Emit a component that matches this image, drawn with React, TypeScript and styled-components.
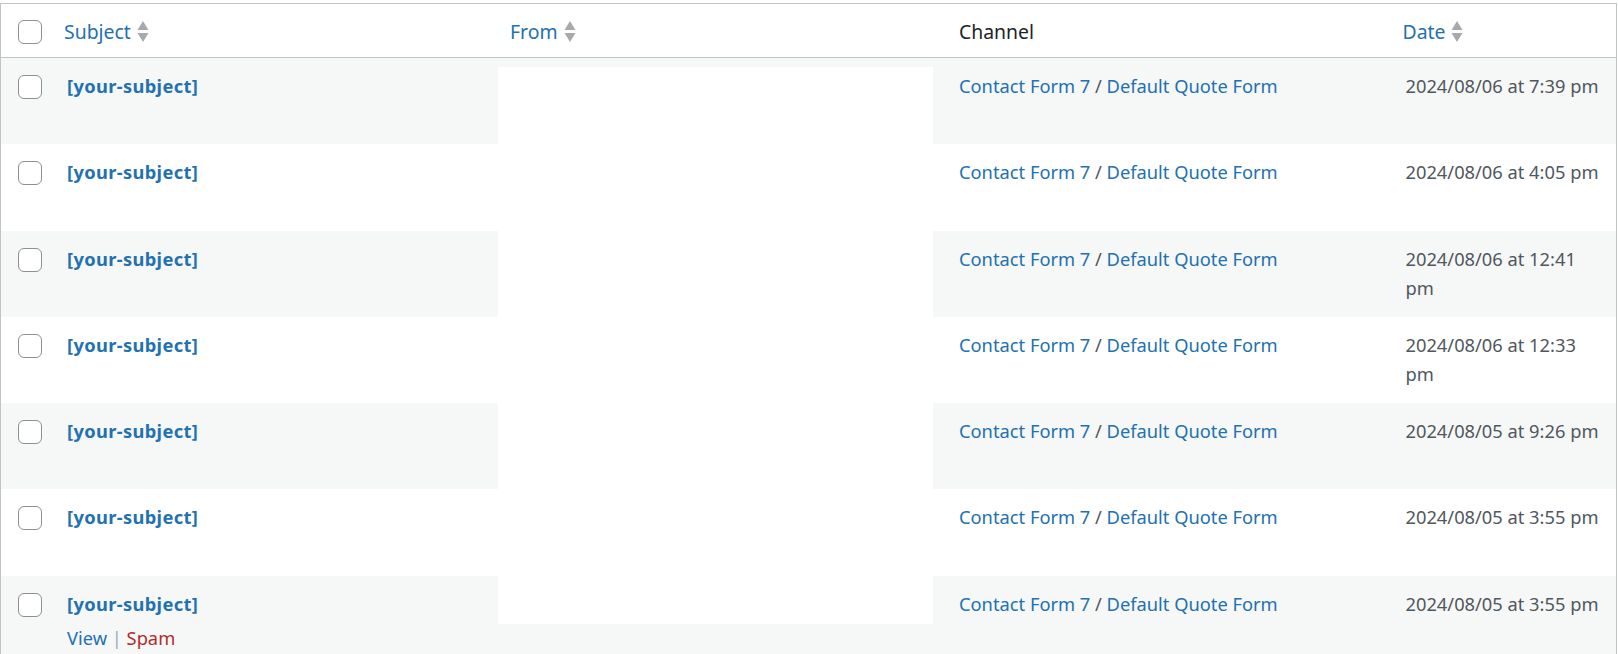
import { FC } from "react";
import styled, { createGlobalStyle } from "styled-components";

const GlobalStyle = createGlobalStyle`
  html, body {
    margin: 0;
    padding: 0;
    background: #fff;
    overflow: hidden;
  }
  body {
    font-family: "Noto Sans", "Liberation Sans", sans-serif;
    font-size: 18.3px;
    line-height: 29.5px;
    color: #50575e;
  }
`;

const COLUMNS = "51px 446px 446px 446.5px 1fr";

const Page = styled.div`
  padding-top: 3px;
`;

const Table = styled.div`
  width: 1617px;
  box-sizing: border-box;
  border: 1px solid #c3c4c7;
  border-bottom: none;
`;

const HeaderRow = styled.div`
  display: grid;
  grid-template-columns: ${COLUMNS};
  height: 53px;
  border-bottom: 1px solid #c3c4c7;
  background: #fff;
`;

const HeaderCell = styled.div<{ $pad?: number }>`
  display: flex;
  align-items: flex-start;
  padding: 13px ${(p) => p.$pad ?? 12}px 0;
  font-size: 19.4px;
  color: #1d2327;
  white-space: nowrap;
`;

const CheckHeader = styled.div`
  padding: 16px 0 0 17px;
`;

const SortLink = styled.a`
  display: inline-flex;
  align-items: center;
  gap: 6px;
  color: #2271b1;
  text-decoration: none;
  cursor: pointer;
`;

const Checkbox = styled.input.attrs({ type: "checkbox", readOnly: true })`
  appearance: none;
  margin: 0;
  display: block;
  width: 24px;
  height: 24px;
  box-sizing: border-box;
  border: 1.5px solid #8c8f94;
  border-radius: 6px;
  background: #fff;
`;

const Row = styled.div<{ $alt: boolean }>`
  display: grid;
  grid-template-columns: ${COLUMNS};
  height: 86.3px;
  background: ${(p) => (p.$alt ? "#f6f7f7" : "#fff")};
`;

const CheckCell = styled.div`
  padding: 17px 0 0 17px;
`;

const Cell = styled.div`
  padding: 13px 15px 0;
`;

const FromCell = styled.div`
  padding: 0;
`;

const Redaction = styled.div<{ $top: number; $height: string }>`
  width: 435px;
  margin-top: ${(p) => p.$top}px;
  height: ${(p) => p.$height};
  background: #fff;
`;

const SubjectLink = styled.a`
  color: #2271b1;
  font-weight: 700;
  letter-spacing: 0.35px;
  text-decoration: none;
`;

const Link = styled.a`
  color: #2271b1;
  text-decoration: none;
`;

const RowActions = styled.div`
  padding-top: 5px;
  color: #a7aaad;
`;

const SpamLink = styled.a`
  color: #b32d2e;
  text-decoration: none;
`;

const SortIcon: FC = () => (
  <svg width="12" height="23" viewBox="0 0 12 23">
    <polygon points="0.5,10 6,1 11.5,10" fill="#a7aaad" />
    <polygon points="0.5,13 11.5,13 6,22" fill="#a7aaad" />
  </svg>
);

const Sortable: FC<{ label: string }> = ({ label }) => (
  <SortLink>
    {label}
    <SortIcon />
  </SortLink>
);

interface Message {
  date: string;
  redaction: { top: number; height: string };
  actions?: boolean;
}

const messages: Message[] = [
  { date: "2024/08/06 at 7:39 pm", redaction: { top: 9, height: "77.3px" } },
  { date: "2024/08/06 at 4:05 pm", redaction: { top: 0, height: "100%" } },
  { date: "2024/08/06 at 12:41 pm", redaction: { top: 0, height: "100%" } },
  { date: "2024/08/06 at 12:33 pm", redaction: { top: 0, height: "100%" } },
  { date: "2024/08/05 at 9:26 pm", redaction: { top: 0, height: "100%" } },
  { date: "2024/08/05 at 3:55 pm", redaction: { top: 0, height: "100%" } },
  {
    date: "2024/08/05 at 3:55 pm",
    redaction: { top: 0, height: "48px" },
    actions: true,
  },
];

const App: FC = () => {
  return (
    <>
      <GlobalStyle />
      <Page>
        <Table>
          <HeaderRow>
            <CheckHeader>
              <Checkbox />
            </CheckHeader>
            <HeaderCell>
              <Sortable label="Subject" />
            </HeaderCell>
            <HeaderCell>
              <Sortable label="From" />
            </HeaderCell>
            <HeaderCell $pad={15}>Channel</HeaderCell>
            <HeaderCell>
              <Sortable label="Date" />
            </HeaderCell>
          </HeaderRow>
          {messages.map((m, i) => (
            <Row key={i} $alt={i % 2 === 0}>
              <CheckCell>
                <Checkbox />
              </CheckCell>
              <Cell>
                <SubjectLink>[your-subject]</SubjectLink>
                {m.actions && (
                  <RowActions>
                    <Link>View</Link> | <SpamLink>Spam</SpamLink>
                  </RowActions>
                )}
              </Cell>
              <FromCell>
                <Redaction $top={m.redaction.top} $height={m.redaction.height} />
              </FromCell>
              <Cell>
                <Link>Contact Form 7</Link> / <Link>Default Quote Form</Link>
              </Cell>
              <Cell>{m.date}</Cell>
            </Row>
          ))}
        </Table>
      </Page>
    </>
  );
};

export default App;
